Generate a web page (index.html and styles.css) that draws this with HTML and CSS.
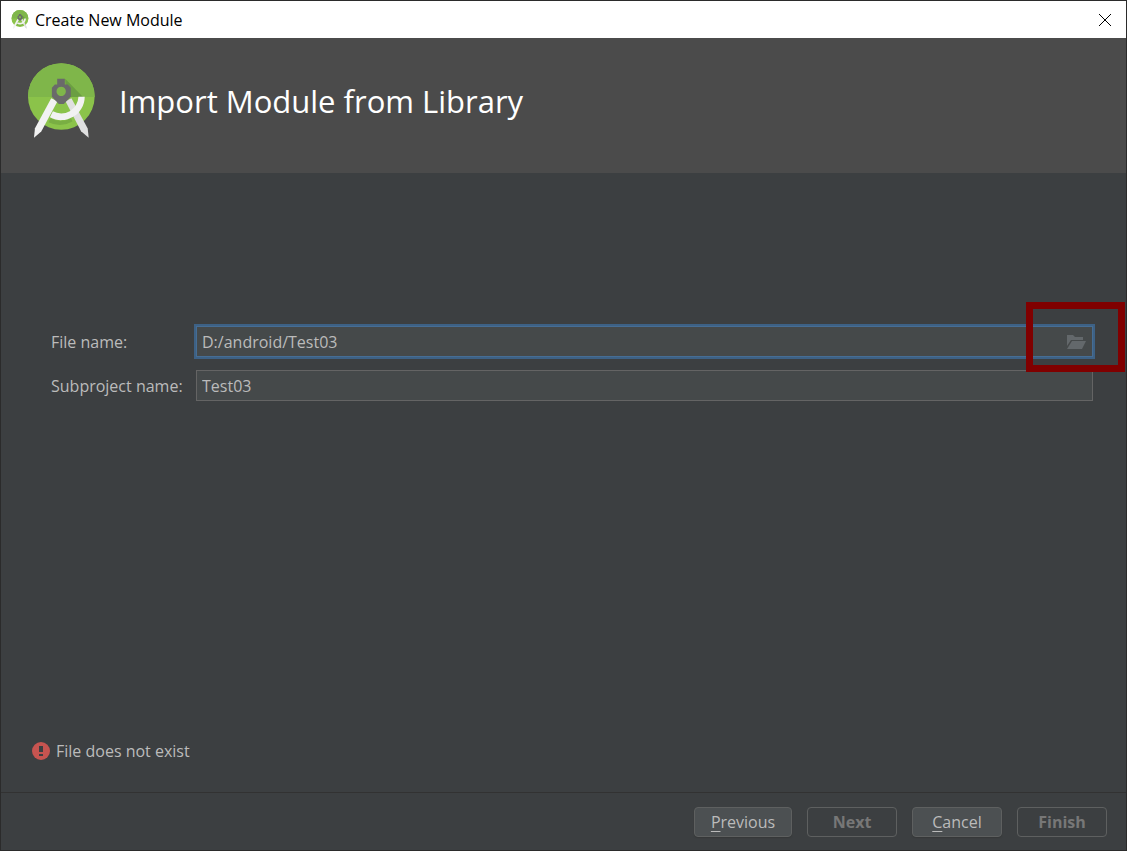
FILE: index.html
```html
<!DOCTYPE html>
<html lang="en">
<head>
<meta charset="utf-8">
<title>Create New Module</title>
<link rel="stylesheet" href="styles.css">
</head>
<body>
<svg class="defs" aria-hidden="true">
  <defs>
    <clipPath id="disc"><circle cx="124.500" cy="124.500" r="100.500"/></clipPath>
    <symbol id="studio" viewBox="24 24 202 225">
      <circle cx="124.500" cy="124.500" r="100.500" fill="#8bc34a"/>
      <g clip-path="url(#disc)">
        <path d="M24 24h202v102H24z" fill="#7fb64a"/>
        <path d="M136 71l54 55h-50z" fill="#6b9e42"/>
        <path d="M92 190a70 70 0 0 0 62 0l4 10a76 76 0 0 1-72 2z" fill="#79ae43"/>
      </g>
      <path d="M137 139l18-9 49 91 3 28-23-20z" fill="#e0e0e0"/>
      <path d="M195 125a71 71 0 0 1-105 62l9-18a52 52 0 0 0 77-44z" fill="#f2f2f2"/>
      <path d="M94 130l19 9-49 91-22 19 3-29z" fill="#f2f2f2"/>
      <path fill-rule="evenodd" d="M112 71h23v17h9l9 10v27l-21 22h-15l-21-22V98l9-10h7zM124 95a14 14 0 1 0 .1 0z" fill="#6a6a6a"/>
    </symbol>
  </defs>
</svg>
<div class="dialog">
  <header class="titlebar">
    <svg class="titlebar-icon" aria-hidden="true"><use href="#studio"/></svg>
    <span class="titlebar-text">Create New Module</span>
    <button class="close" type="button" aria-label="Close">
      <svg viewBox="0 0 12 12" aria-hidden="true"><path d="M0 0l12 12M12 0L0 12"/></svg>
    </button>
  </header>
  <section class="banner">
    <svg class="banner-logo" aria-hidden="true"><use href="#studio"/></svg>
    <h1 class="banner-title">Import Module from Library</h1>
  </section>
  <main class="content">
    <form class="form">
      <label for="file">File name:</label>
      <div class="field field-focused">
        <input id="file" type="text" value="D:/android/Test03">
        <button class="browse" type="button" aria-label="Browse">
          <svg viewBox="0 0 20 16" aria-hidden="true"><path d="M1 12V1h6l2 2h8v3H5z"/><path d="M6 7h14l-4 8H1z"/></svg>
        </button>
        <div class="highlight"></div>
      </div>
      <label for="subproject">Subproject name:</label>
      <div class="field">
        <input id="subproject" type="text" value="Test03">
      </div>
    </form>
    <p class="status">
      <svg class="status-icon" viewBox="0 0 18 18" aria-hidden="true"><circle cx="9" cy="9" r="9"/><path d="M7 4h4v6H7zM7 12h4v2H7z"/></svg>
      <span>File does not exist</span>
    </p>
  </main>
  <footer class="actions">
    <button class="btn btn-wide" type="button"><u>P</u>revious</button>
    <button class="btn" type="button" disabled>Next</button>
    <button class="btn" type="button"><u>C</u>ancel</button>
    <button class="btn" type="button" disabled>Finish</button>
  </footer>
</div>
</body>
</html>
```
FILE: styles.css
```css
* {
  box-sizing: border-box;
}

body {
  margin: 0;
  font: 16px/20px "Open Sans", "Noto Sans", sans-serif;
  color: #bbbbbb;
  background: #3c3f41;
}

button,
input {
  font: inherit;
  color: inherit;
}

.defs {
  position: absolute;
  width: 0;
  height: 0;
}

.dialog {
  display: flex;
  flex-direction: column;
  min-height: 100vh;
  border: 1px solid #2b2b2b;
}

.titlebar {
  display: flex;
  align-items: center;
  height: 37px;
  padding: 0 15px 0 10px;
  color: #000000;
  background: #ffffff;
}

.titlebar-icon {
  width: 18px;
  height: 19px;
  margin-right: 6px;
}

.titlebar-text {
  flex: 1;
}

.close {
  display: flex;
  padding: 0;
  border: 0;
  background: none;
}

.close svg {
  width: 12px;
  height: 12px;
  fill: none;
  stroke: #000000;
  overflow: visible;
}

.banner {
  display: flex;
  align-items: flex-start;
  gap: 24px;
  height: 135px;
  padding: 25px 27px;
  background: #4b4b4b;
}

.banner-logo {
  width: 67px;
  height: 75px;
}

.banner-title {
  margin: 0;
  padding-top: 16px;
  font-size: 31px;
  font-weight: 400;
  line-height: 44px;
  color: #ffffff;
}

.content {
  display: flex;
  flex: 1;
  flex-direction: column;
  justify-content: space-between;
  padding: 153px 31px 31px;
}

.form {
  display: grid;
  grid-template-columns: 129px 1fr;
  column-gap: 16px;
  row-gap: 13px;
  align-items: center;
  padding: 0 2px 0 19px;
}

.form label {
  white-space: nowrap;
}

.field {
  position: relative;
  display: flex;
  height: 31px;
  border: 1px solid #646464;
  background: #45494a;
}

.field-focused {
  z-index: 1;
  border-color: #466d94;
  box-shadow: 0 0 0 2px #3d6185;
}

.field input {
  flex: 1;
  min-width: 0;
  padding: 0 5px;
  border: 0;
  outline: 0;
  background: none;
}

.browse {
  display: flex;
  align-items: center;
  padding: 0 6px;
  border: 0;
  background: none;
}

.browse svg {
  width: 20px;
  height: 16px;
  fill: #63686b;
}

.highlight {
  position: absolute;
  top: -25px;
  right: -33px;
  width: 99px;
  height: 70px;
  border: 7px solid #800000;
  pointer-events: none;
}

.status {
  display: flex;
  align-items: center;
  gap: 6px;
  margin: 0;
}

.status-icon {
  width: 18px;
  height: 18px;
  fill: #c75450;
}

.status-icon path {
  fill: #3c3f41;
}

.actions {
  display: flex;
  justify-content: flex-end;
  gap: 15px;
  padding: 14px 19px 13px;
  border-top: 1px solid #323232;
}

.btn {
  width: 90px;
  height: 30px;
  padding: 0;
  border: 1px solid #5e6060;
  border-radius: 4px;
  background: #4c5052;
  box-shadow: 0 1px 1px #363839;
}

.btn-wide {
  width: 98px;
}

.btn u {
  text-underline-offset: 3px;
}

.btn:disabled {
  font-weight: 700;
  color: #777777;
  background: none;
  box-shadow: none;
}
```
